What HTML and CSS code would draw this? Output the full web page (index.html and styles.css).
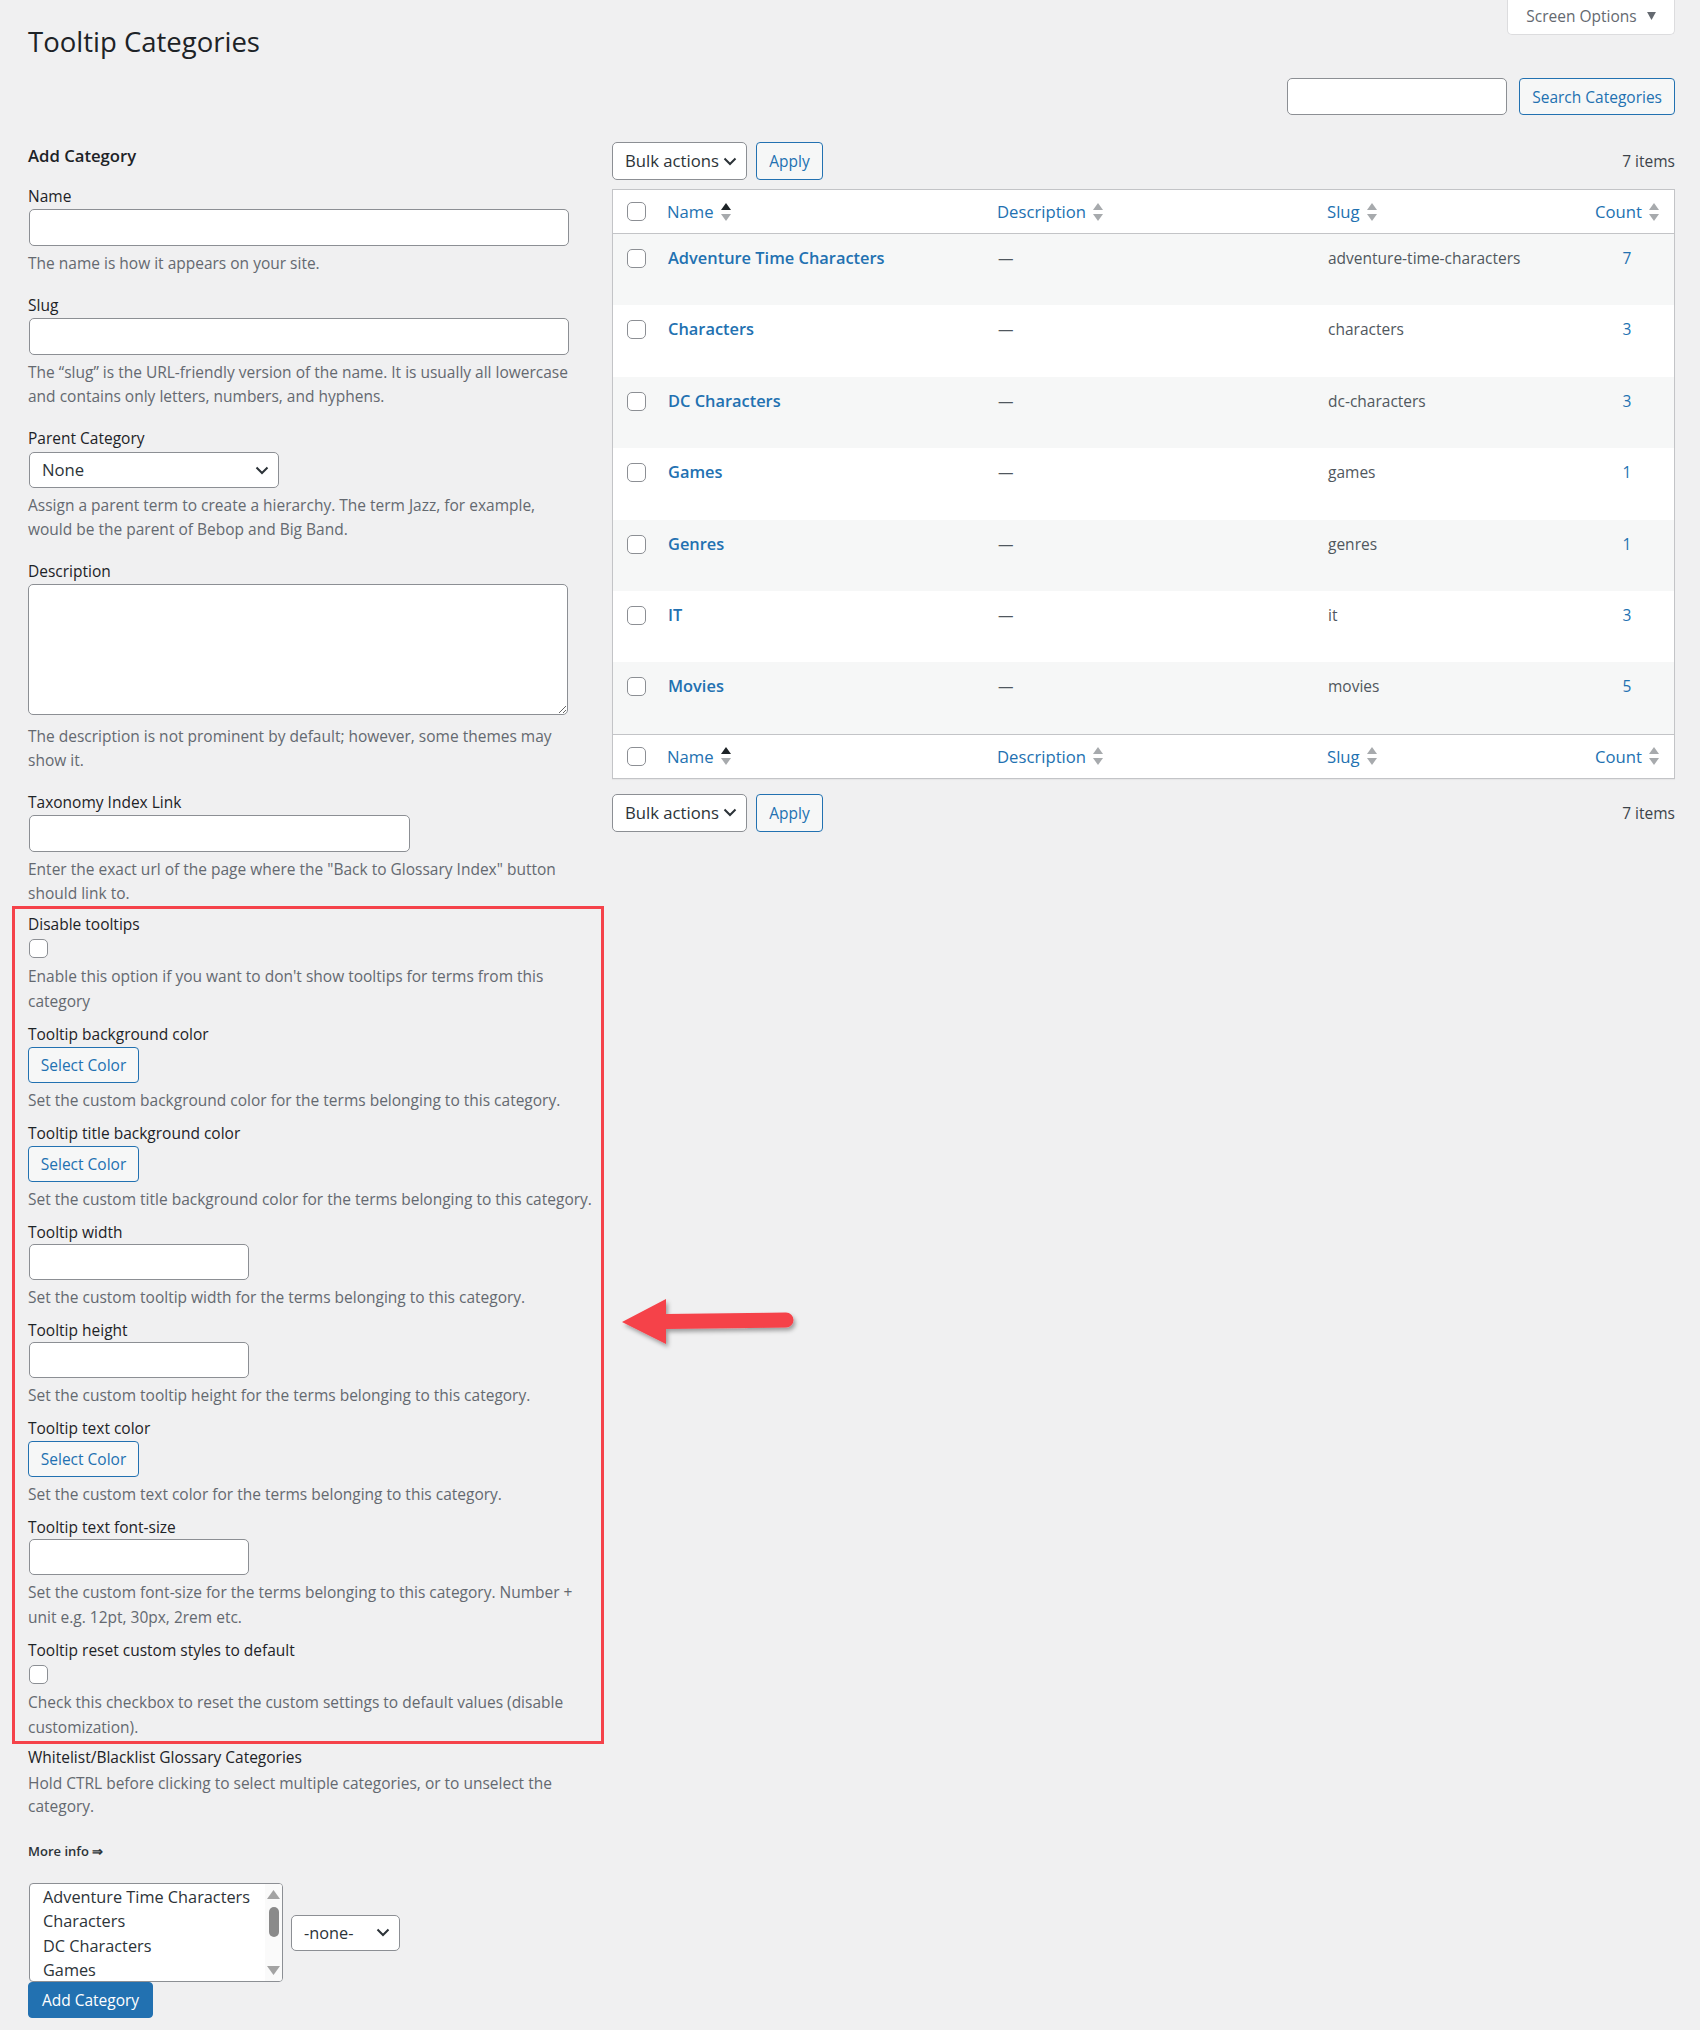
FILE: index.html
```html
<!DOCTYPE html>
<html lang="en">
<head>
    <meta charset="UTF-8">
    <meta name="viewport" content="width=device-width, initial-scale=1.0">
    <title>Tooltip Categories</title>
    <link rel="stylesheet" href="styles.css">
</head>
<body>
    <div class="wrap">
        <div class="top-bar">
            <h1 class="page-title">Tooltip Categories</h1>
            <button class="screen-options">Screen Options
                <svg class="tri-down" viewBox="0 0 10 9"><path d="M0 0h10L5 9z"/></svg>
            </button>
        </div>

        <div class="search-box">
            <input type="search" class="search-input">
            <button class="button">Search Categories</button>
        </div>

        <div class="col-wrap">
            <div class="col-left">
                <h2 class="form-title">Add Category</h2>

                <div class="form-field">
                    <label>Name</label>
                    <input type="text" class="text-input">
                    <p class="description">The name is how it appears on your site.</p>
                </div>

                <div class="form-field">
                    <label>Slug</label>
                    <input type="text" class="text-input">
                    <p class="description">The “slug” is the URL-friendly version of the name. It is usually all lowercase and contains only letters, numbers, and hyphens.</p>
                </div>

                <div class="form-field">
                    <label>Parent Category</label>
                    <div class="select select-parent">
                        <span>None</span>
                        <svg class="chevron" viewBox="0 0 14 9"><path d="M1.5 1.5L7 7l5.5-5.5"/></svg>
                    </div>
                    <p class="description">Assign a parent term to create a hierarchy. The term Jazz, for example, would be the parent of Bebop and Big Band.</p>
                </div>

                <div class="form-field">
                    <label>Description</label>
                    <textarea class="text-area"></textarea>
                    <p class="description after-area">The description is not prominent by default; however, some themes may show it.</p>
                </div>

                <div class="form-field">
                    <label>Taxonomy Index Link</label>
                    <input type="text" class="text-input link-input">
                    <p class="description">Enter the exact url of the page where the "Back to Glossary Index" button should link to.</p>
                </div>

                <div class="highlight-box">
                    <div class="option-field">
                        <label>Disable tooltips</label>
                        <input type="checkbox" class="checkbox">
                        <p class="description">Enable this option if you want to don't show tooltips for terms from this category</p>
                    </div>
                    <div class="option-field">
                        <label>Tooltip background color</label>
                        <button class="button color-button">Select Color</button>
                        <p class="description">Set the custom background color for the terms belonging to this category.</p>
                    </div>
                    <div class="option-field">
                        <label>Tooltip title background color</label>
                        <button class="button color-button">Select Color</button>
                        <p class="description">Set the custom title background color for the terms belonging to this category.</p>
                    </div>
                    <div class="option-field">
                        <label>Tooltip width</label>
                        <input type="text" class="text-input small-input">
                        <p class="description">Set the custom tooltip width for the terms belonging to this category.</p>
                    </div>
                    <div class="option-field">
                        <label>Tooltip height</label>
                        <input type="text" class="text-input small-input">
                        <p class="description">Set the custom tooltip height for the terms belonging to this category.</p>
                    </div>
                    <div class="option-field">
                        <label>Tooltip text color</label>
                        <button class="button color-button">Select Color</button>
                        <p class="description">Set the custom text color for the terms belonging to this category.</p>
                    </div>
                    <div class="option-field">
                        <label>Tooltip text font-size</label>
                        <input type="text" class="text-input small-input">
                        <p class="description">Set the custom font-size for the terms belonging to this category. Number + unit e.g. 12pt, 30px, 2rem etc.</p>
                    </div>
                    <div class="option-field">
                        <label>Tooltip reset custom styles to default</label>
                        <input type="checkbox" class="checkbox">
                        <p class="description">Check this checkbox to reset the custom settings to default values (disable customization).</p>
                    </div>
                </div>

                <div class="glossary-field">
                    <label>Whitelist/Blacklist Glossary Categories</label>
                    <p class="description">Hold CTRL before clicking to select multiple categories, or to unselect the category.</p>
                    <div class="more-info">More info ⇒</div>
                    <div class="list-row">
                        <div class="listbox">
                            <div class="listbox-options">
                                <div>Adventure Time Characters</div>
                                <div>Characters</div>
                                <div>DC Characters</div>
                                <div>Games</div>
                            </div>
                            <div class="scrollbar">
                                <svg class="scroll-arrow" viewBox="0 0 13 9"><path d="M0 9L6.5 0 13 9z"/></svg>
                                <div class="scroll-thumb"></div>
                                <svg class="scroll-arrow scroll-down" viewBox="0 0 13 9"><path d="M0 0h13L6.5 9z"/></svg>
                            </div>
                        </div>
                        <div class="select select-none">
                            <span>-none-</span>
                            <svg class="chevron" viewBox="0 0 14 9"><path d="M1.5 1.5L7 7l5.5-5.5"/></svg>
                        </div>
                    </div>
                    <button class="button button-primary">Add Category</button>
                </div>
            </div>

            <div class="col-right">
                <div class="tablenav">
                    <div class="select select-bulk">
                        <span>Bulk actions</span>
                        <svg class="chevron" viewBox="0 0 14 9"><path d="M1.5 1.5L7 7l5.5-5.5"/></svg>
                    </div>
                    <button class="button apply-button">Apply</button>
                    <span class="item-count">7 items</span>
                </div>

                <table class="terms-table">
                    <colgroup>
                        <col class="col-cb">
                        <col class="col-name">
                        <col class="col-desc">
                        <col class="col-slug">
                        <col class="col-count">
                    </colgroup>
                    <thead>
                        <tr>
                            <th class="check-column"><input type="checkbox" class="checkbox"></th>
                            <th><a class="sort-link">Name <svg class="sort-icon sorted" viewBox="0 0 10 19"><path class="up" d="M0 7L5 0l5 7z"/><path class="down" d="M0 11h10l-5 7z"/></svg></a></th>
                            <th><a class="sort-link">Description <svg class="sort-icon" viewBox="0 0 10 19"><path class="up" d="M0 7L5 0l5 7z"/><path class="down" d="M0 11h10l-5 7z"/></svg></a></th>
                            <th><a class="sort-link">Slug <svg class="sort-icon" viewBox="0 0 10 19"><path class="up" d="M0 7L5 0l5 7z"/><path class="down" d="M0 11h10l-5 7z"/></svg></a></th>
                            <th class="count-head"><a class="sort-link">Count <svg class="sort-icon" viewBox="0 0 10 19"><path class="up" d="M0 7L5 0l5 7z"/><path class="down" d="M0 11h10l-5 7z"/></svg></a></th>
                        </tr>
                    </thead>
                    <tbody>
                        <tr>
                            <td class="check-column"><input type="checkbox" class="checkbox"></td>
                            <td><a class="row-title">Adventure Time Characters</a></td>
                            <td class="muted">—</td>
                            <td class="muted">adventure-time-characters</td>
                            <td class="count"><a>7</a></td>
                        </tr>
                        <tr>
                            <td class="check-column"><input type="checkbox" class="checkbox"></td>
                            <td><a class="row-title">Characters</a></td>
                            <td class="muted">—</td>
                            <td class="muted">characters</td>
                            <td class="count"><a>3</a></td>
                        </tr>
                        <tr>
                            <td class="check-column"><input type="checkbox" class="checkbox"></td>
                            <td><a class="row-title">DC Characters</a></td>
                            <td class="muted">—</td>
                            <td class="muted">dc-characters</td>
                            <td class="count"><a>3</a></td>
                        </tr>
                        <tr>
                            <td class="check-column"><input type="checkbox" class="checkbox"></td>
                            <td><a class="row-title">Games</a></td>
                            <td class="muted">—</td>
                            <td class="muted">games</td>
                            <td class="count"><a>1</a></td>
                        </tr>
                        <tr>
                            <td class="check-column"><input type="checkbox" class="checkbox"></td>
                            <td><a class="row-title">Genres</a></td>
                            <td class="muted">—</td>
                            <td class="muted">genres</td>
                            <td class="count"><a>1</a></td>
                        </tr>
                        <tr>
                            <td class="check-column"><input type="checkbox" class="checkbox"></td>
                            <td><a class="row-title">IT</a></td>
                            <td class="muted">—</td>
                            <td class="muted">it</td>
                            <td class="count"><a>3</a></td>
                        </tr>
                        <tr>
                            <td class="check-column"><input type="checkbox" class="checkbox"></td>
                            <td><a class="row-title">Movies</a></td>
                            <td class="muted">—</td>
                            <td class="muted">movies</td>
                            <td class="count"><a>5</a></td>
                        </tr>
                    </tbody>
                    <tfoot>
                        <tr>
                            <th class="check-column"><input type="checkbox" class="checkbox"></th>
                            <th><a class="sort-link">Name <svg class="sort-icon sorted" viewBox="0 0 10 19"><path class="up" d="M0 7L5 0l5 7z"/><path class="down" d="M0 11h10l-5 7z"/></svg></a></th>
                            <th><a class="sort-link">Description <svg class="sort-icon" viewBox="0 0 10 19"><path class="up" d="M0 7L5 0l5 7z"/><path class="down" d="M0 11h10l-5 7z"/></svg></a></th>
                            <th><a class="sort-link">Slug <svg class="sort-icon" viewBox="0 0 10 19"><path class="up" d="M0 7L5 0l5 7z"/><path class="down" d="M0 11h10l-5 7z"/></svg></a></th>
                            <th class="count-head"><a class="sort-link">Count <svg class="sort-icon" viewBox="0 0 10 19"><path class="up" d="M0 7L5 0l5 7z"/><path class="down" d="M0 11h10l-5 7z"/></svg></a></th>
                        </tr>
                    </tfoot>
                </table>

                <div class="tablenav tablenav-bottom">
                    <div class="select select-bulk">
                        <span>Bulk actions</span>
                        <svg class="chevron" viewBox="0 0 14 9"><path d="M1.5 1.5L7 7l5.5-5.5"/></svg>
                    </div>
                    <button class="button apply-button">Apply</button>
                    <span class="item-count">7 items</span>
                </div>
            </div>

            <!-- annotation arrow pointing at the highlighted options -->
            <svg class="annotation-arrow" viewBox="0 0 190 60">
                <defs>
                    <filter id="arrowShadow" x="-10%" y="-20%" width="130%" height="160%">
                        <feDropShadow dx="2" dy="3" stdDeviation="2" flood-color="#000" flood-opacity="0.35"/>
                    </filter>
                </defs>
                <path d="M4 28L48 5v15l120-1.5a7.5 7.5 0 0 1 0 15L48 35v15z" filter="url(#arrowShadow)"/>
            </svg>
        </div>
    </div>
</body>
</html>
```

FILE: styles.css
```css
body {
    margin: 0;
    padding: 0;
    background: #f0f0f1;
    color: #3c434a;
    font-family: "Open Sans", "Noto Sans", sans-serif;
    font-size: 15.5px;
    line-height: 24px;
}

.wrap {
    padding: 0 25px 0 28px;
}

button {
    font-family: inherit;
    cursor: pointer;
}

/* header */

.top-bar {
    display: flex;
    justify-content: space-between;
    align-items: flex-start;
}

.page-title {
    margin: 24px 0 0;
    font-size: 27.5px;
    line-height: 36px;
    font-weight: 400;
    color: #1d2327;
}

.screen-options {
    width: 168px;
    height: 35px;
    display: flex;
    align-items: center;
    justify-content: center;
    gap: 10px;
    padding: 0 0 2px;
    background: #fff;
    border: 1px solid #dcdcde;
    border-top: none;
    border-radius: 0 0 5px 5px;
    color: #646970;
    font-size: 15.5px;
}

.tri-down {
    width: 9px;
    height: 8px;
    fill: #646970;
}

.search-box {
    display: flex;
    justify-content: flex-end;
    gap: 12px;
    margin-top: 18px;
}

.search-input {
    width: 220px;
    height: 37px;
    box-sizing: border-box;
    border: 1px solid #8c8f94;
    border-radius: 5px;
    background: #fff;
    margin: 0;
}

/* buttons */

.button {
    height: 37px;
    box-sizing: border-box;
    padding: 0 12px;
    border: 1px solid #2271b1;
    border-radius: 4px;
    background: #f6f7f7;
    color: #2271b1;
    font-size: 15.5px;
    line-height: 24px;
    white-space: nowrap;
}

.button-primary {
    display: block;
    width: 125px;
    height: 36px;
    background: #2271b1;
    color: #fff;
    margin: 0;
}

/* columns */

.col-wrap {
    position: relative;
    display: flex;
    margin-top: 27px;
}

.col-left {
    width: 568px;
    flex: none;
    padding-right: 8px;
}

.col-right {
    flex: 1;
    padding-left: 8px;
}

.form-title {
    margin: 2px 0 0;
    font-size: 16.7px;
    line-height: 24px;
    font-weight: 600;
    color: #1d2327;
}

label {
    display: block;
    color: #1d2327;
    line-height: 24px;
}

.description {
    margin: 5px 0 0;
    color: #646970;
    line-height: 24px;
}

.form-field {
    margin-top: 18px;
}

.form-title + .form-field {
    margin-top: 16px;
}

.form-field .description {
    width: 543px;
}

.text-input {
    display: block;
    width: 540px;
    height: 37px;
    box-sizing: border-box;
    margin: 1px 0 0 1px;
    border: 1px solid #8c8f94;
    border-radius: 5px;
    background: #fff;
}

.link-input {
    width: 381px;
}

.small-input {
    width: 220px;
    height: 36px;
}

.text-area {
    display: block;
    width: 540px;
    height: 131px;
    box-sizing: border-box;
    margin: 1px 0 0;
    border: 1px solid #8c8f94;
    border-radius: 5px;
    background: #fff;
}

.form-field .after-area {
    margin-top: 9px;
}

.checkbox {
    appearance: none;
    -webkit-appearance: none;
    display: block;
    width: 19px;
    height: 19px;
    margin: 0;
    border: 1px solid #8c8f94;
    border-radius: 5px;
    background: #fff;
}

/* fake selects */

.select {
    display: flex;
    align-items: center;
    justify-content: space-between;
    box-sizing: border-box;
    background: #fff;
    border: 1px solid #8c8f94;
    border-radius: 5px;
    color: #2c3338;
    font-size: 16.7px;
}

.chevron {
    width: 14px;
    height: 9px;
    fill: none;
    stroke: #2c3338;
    stroke-width: 2;
}

.select-parent {
    width: 250px;
    height: 36px;
    margin: 2px 0 0 1px;
    padding: 0 9px 0 12px;
}

.select-none {
    width: 109px;
    height: 36px;
    padding: 0 9px 0 12px;
    font-size: 16.3px;
}

.select-bulk {
    width: 135px;
    height: 38px;
    padding: 0 9px 0 12px;
}

/* highlighted plugin options */

.highlight-box {
    margin: 1px -8px 0 -16px;
    padding: 3px 5px 1px 13px;
    border: 3px solid #f5424a;
}

.option-field + .option-field {
    margin-top: 8px;
}

.option-field .checkbox {
    margin-top: 3px;
    margin-left: 1px;
}

.option-field .checkbox + .description {
    margin-top: 6px;
}

.option-field .description {
    line-height: 25px;
}

.option-field .small-input {
    margin-top: 0;
}

.color-button {
    display: block;
    width: 111px;
    height: 36px;
    margin-top: 1px;
    padding: 0;
}

/* glossary categories */

.glossary-field {
    margin-top: 1px;
}

.glossary-field .description {
    margin-top: 3px;
    line-height: 23px;
}

.more-info {
    margin-top: 23px;
    font-size: 13px;
    line-height: 20px;
    font-weight: 600;
    color: #2c3338;
}

.list-row {
    display: flex;
    align-items: center;
    gap: 8px;
    margin-top: 22px;
}

.listbox {
    display: flex;
    width: 254px;
    height: 99px;
    box-sizing: border-box;
    margin-left: 1px;
    border: 1px solid #8c8f94;
    border-radius: 4px;
    background: #fff;
    overflow: hidden;
}

.listbox-options {
    flex: 1;
    padding: 1px 0 0 13px;
    font-size: 16.3px;
    line-height: 24.3px;
    color: #2c3338;
    white-space: nowrap;
}

.scrollbar {
    width: 17px;
    display: flex;
    flex-direction: column;
    align-items: center;
    background: #fafafa;
}

.scroll-arrow {
    width: 13px;
    height: 9px;
    margin-top: 6px;
    fill: #a3a3a3;
}

.scroll-thumb {
    width: 10px;
    height: 30px;
    margin-top: 8px;
    border-radius: 5px;
    background: #8a8a8a;
}

.scroll-down {
    margin-top: auto;
    margin-bottom: 6px;
}

/* list table */

.tablenav {
    display: flex;
    align-items: center;
    height: 38px;
}

.tablenav-bottom {
    margin-top: 15px;
}

.apply-button {
    width: 67px;
    height: 38px;
    margin-left: 9px;
    padding: 0;
}

.item-count {
    margin-left: auto;
}

.terms-table {
    width: 100%;
    margin-top: 9px;
    table-layout: fixed;
    border-collapse: separate;
    border-spacing: 0;
    border: 1px solid #c3c4c7;
    background: #fff;
    box-shadow: 0 1px 1px rgba(0, 0, 0, 0.04);
}

.col-cb {
    width: 42px;
}

.col-name {
    width: 330px;
}

.col-desc {
    width: 330px;
}

.col-slug {
    width: 265px;
}

.col-count {
    width: 94px;
}

.terms-table th {
    padding: 10px 12px 9px;
    text-align: left;
    font-weight: 400;
    font-size: 16.7px;
    line-height: 24px;
}

.terms-table thead th {
    border-bottom: 1px solid #c3c4c7;
}

.terms-table tfoot th {
    border-top: 1px solid #c3c4c7;
}

.terms-table th.check-column {
    padding: 12px 0 0 14px;
    vertical-align: top;
}

.terms-table .count-head {
    text-align: center;
    padding: 10px 0 9px;
}

.sort-link {
    display: inline-flex;
    align-items: center;
    gap: 7px;
    color: #2271b1;
}

.sort-icon {
    width: 10px;
    height: 19px;
    fill: #a7aaad;
}

.sort-icon.sorted .up {
    fill: #1d2327;
}

.terms-table td {
    padding: 12px 13px 35.4px;
    vertical-align: top;
    line-height: 24px;
}

.terms-table tbody tr:nth-child(odd) td {
    background: #f6f7f7;
}

.terms-table td.check-column {
    padding: 15px 0 0 14px;
}

.row-title {
    color: #2271b1;
    font-weight: 600;
    font-size: 16.4px;
}

.muted {
    color: #50575e;
}

.count {
    text-align: center;
}

.count a {
    color: #2271b1;
}

.annotation-arrow {
    position: absolute;
    left: 590px;
    top: 1152px;
    width: 190px;
    height: 60px;
    fill: #f5424a;
}
```
